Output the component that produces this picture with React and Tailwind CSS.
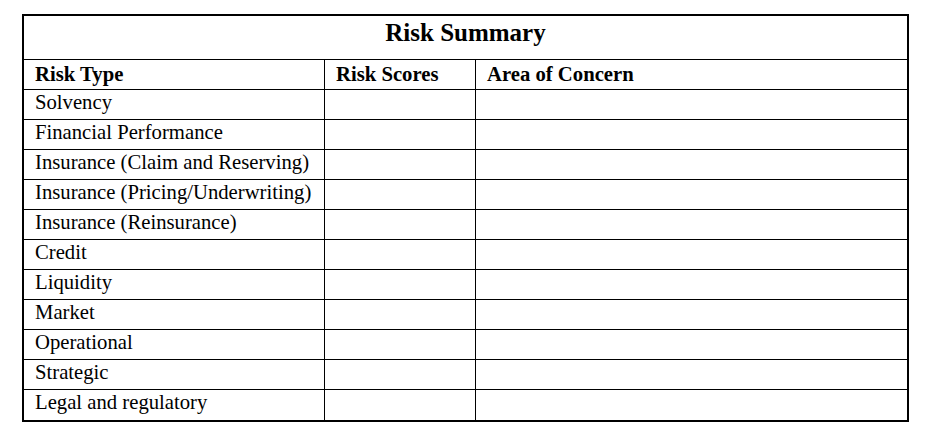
export default function App() {
  const rows = [
    "Solvency",
    "Financial Performance",
    "Insurance (Claim and Reserving)",
    "Insurance (Pricing/Underwriting)",
    "Insurance (Reinsurance)",
    "Credit",
    "Liquidity",
    "Market",
    "Operational",
    "Strategic",
    "Legal and regulatory",
  ];
  return (
    <div className="w-[929px] h-[432px] bg-white pt-[14px] pl-[22px] font-['Liberation_Serif',serif] text-black">
      <div className="w-[887px] border-2 border-black">
        <div className="h-[44px] border-b-[1.5px] border-black flex justify-center pt-[3px]">
          <span className="text-[25px] font-bold leading-[28px]">Risk Summary</span>
        </div>
        <div className="grid grid-cols-[301px_151px_1fr] h-[30px] border-b-[1.5px] border-black text-[20.7px] font-bold leading-[28px]">
          <div className="pl-[11px] border-r-[1.5px] border-black">Risk Type</div>
          <div className="pl-[11px] border-r-[1.5px] border-black">Risk Scores</div>
          <div className="pl-[11px]">Area of Concern</div>
        </div>
        {rows.map((r, i) => (
          <div
            key={r}
            className={
              "grid grid-cols-[301px_151px_1fr] h-[30px] text-[20.7px] leading-[24px] border-black " +
              (i < rows.length - 1 ? "border-b-[1.5px]" : "")
            }
          >
            <div className="pl-[11px] border-r-[1.5px] border-black whitespace-nowrap">{r}</div>
            <div className="border-r-[1.5px] border-black"></div>
            <div></div>
          </div>
        ))}
      </div>
    </div>
  );
}
